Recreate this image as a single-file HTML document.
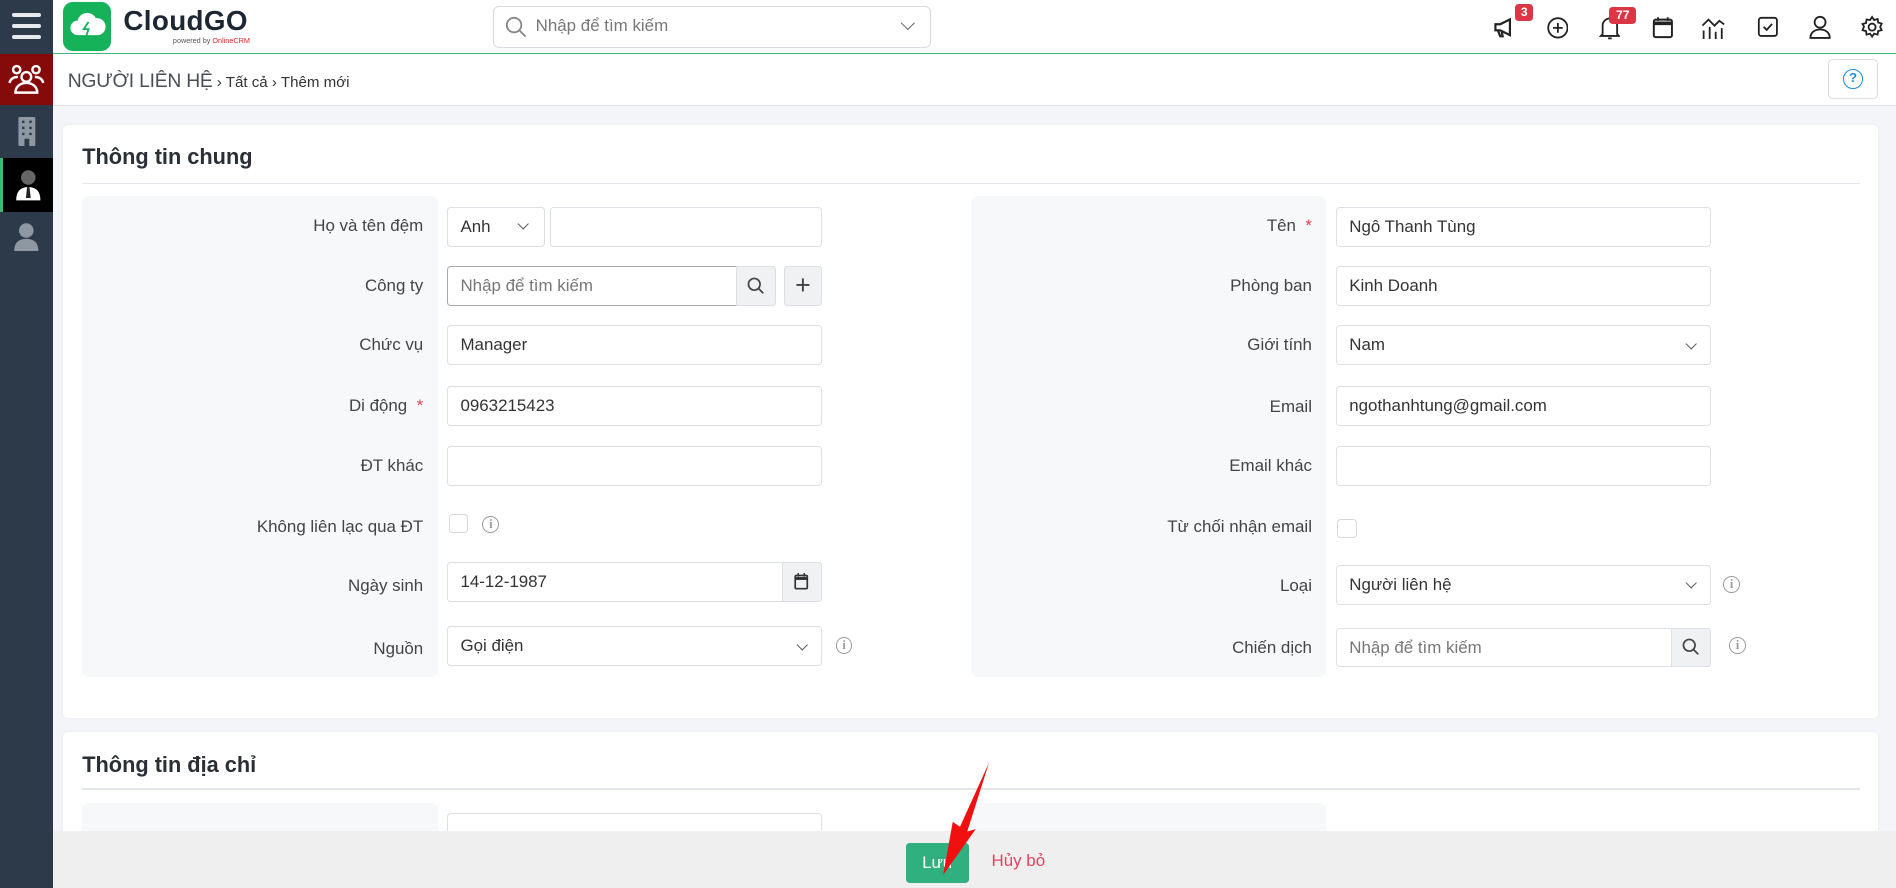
<!DOCTYPE html>
<html><head><meta charset="utf-8">
<style>
*{box-sizing:border-box;margin:0;padding:0}
html,body{width:1896px;height:888px;overflow:hidden}
body{zoom:1.2092;width:1568px;height:734px;position:relative;background:#f3f5f8;font-family:"Liberation Sans","Noto Sans CJK SC",sans-serif;color:#333;font-size:14px}
.a{position:absolute}
.side{left:0;top:0;width:44px;height:734px;background:#2c3a4a}
.top{left:44px;top:0;width:1524px;height:45px;background:#fff;border-bottom:1.5px solid #3cb878}
.crumb{left:44px;top:45px;width:1524px;height:43px;background:#fff;border-bottom:1px solid #dfe3e8}
.card{background:#fff;border-radius:4px;box-shadow:0 0 3px rgba(0,0,0,.06)}
.panel{background:#f7f8fa;border-radius:6px}
.lbl{font-size:14px;color:#444;text-align:right;width:280px;line-height:32px}
.inp{height:33px;border:1px solid #dcdfe3;border-radius:3px;background:#fff;line-height:31px;padding-left:10px;font-size:14px;color:#333}
.ph{color:#777}
.btn{height:33px;border:1px solid #dcdfe3;background:#f0f1f3;border-radius:0 3px 3px 0}
.chev{position:absolute;right:12px;top:11px;width:7px;height:7px;border-right:1.3px solid #555;border-bottom:1.3px solid #555;transform:rotate(45deg)}
.cb{width:16px;height:16px;border:1px solid #d5d8dc;border-radius:3px;background:#fff}
.info{width:14px;height:14px;border:1.3px solid #999;border-radius:50%;font-size:10px;color:#999;text-align:center;line-height:12px;font-family:"Liberation Serif",serif;font-weight:bold}
.star{color:#e04050}
</style></head><body>
<div class="a side"></div>
<div class="a" style="left:10px;top:11px;width:24px;height:3px;background:#e6e9ee;border-radius:2px"></div>
<div class="a" style="left:10px;top:20px;width:24px;height:3px;background:#e6e9ee;border-radius:2px"></div>
<div class="a" style="left:10px;top:29px;width:24px;height:3px;background:#e6e9ee;border-radius:2px"></div>
<div class="a" style="left:0;top:45px;width:44px;height:42px;background:#850b0b"></div>
<svg class="a" style="left:6px;top:50px" width="32" height="32" viewBox="0 0 32 32" fill="none" stroke="#fff" stroke-width="2"><circle cx="8" cy="8" r="3"/><circle cx="24" cy="8" r="3"/><circle cx="16" cy="14" r="4"/><path d="M2 19c1-4 4-5 7-5M30 19c-1-4-4-5-7-5M7 27c0-5 4-8 9-8s9 3 9 8z"/></svg>
<svg class="a" style="left:13px;top:97px" width="18" height="24" viewBox="0 0 18 24"><rect x="2" y="0" width="14" height="24" rx="1" fill="#8e98a3"/><g fill="#2c3a4a"><rect x="5" y="3" width="2" height="2"/><rect x="11" y="3" width="2" height="2"/><rect x="5" y="8" width="2" height="2"/><rect x="11" y="8" width="2" height="2"/><rect x="5" y="13" width="2" height="2"/><rect x="11" y="13" width="2" height="2"/><rect x="7" y="18" width="4" height="6"/></g></svg>
<div class="a" style="left:0;top:131px;width:44px;height:44px;background:#000;border-left:3px solid #3cb878"></div>
<svg class="a" style="left:12px;top:140px" width="22" height="26" viewBox="0 0 22 26"><circle cx="11" cy="7" r="6" fill="#666"/><path d="M1 26c0-8 4-11 10-11s10 3 10 11z" fill="#fff"/><path d="M10 15h2l1 9h-4z" fill="#222"/></svg>
<svg class="a" style="left:11px;top:184px" width="22" height="24" viewBox="0 0 22 24"><circle cx="11" cy="7" r="6" fill="#8e98a3"/><path d="M1 24c0-7 4-10 10-10s10 3 10 10z" fill="#8e98a3"/></svg>

<div class="a top"></div>
<div class="a" style="left:52px;top:2px;width:40px;height:40px;background:#16b25a;border-radius:8px"></div>
<svg class="a" style="left:56px;top:9px" width="32" height="26" viewBox="0 0 32 26"><path d="M8 20a6 6 0 0 1 0-12 8 8 0 0 1 15-2 7 7 0 0 1 2 14z" fill="#fff"/><path d="M17 9l-4 6h4l-2 6" stroke="#16b25a" stroke-width="1.5" fill="none"/></svg>
<div class="a" style="left:102px;top:4px;font-size:23px;font-weight:bold;color:#1d2733;letter-spacing:.3px">CloudGO</div>
<div class="a" style="left:143px;top:30px;font-size:6px;color:#555">powered by <span style="color:#d22">OnlineCRM</span></div>

<div class="a" style="left:408px;top:5px;width:362px;height:35px;border:1px solid #d8dbe0;border-radius:5px;background:#fff"></div>
<svg class="a" style="left:418px;top:13px" width="18" height="18" viewBox="0 0 18 18" fill="none" stroke="#888" stroke-width="1.5"><circle cx="7.5" cy="7.5" r="6"/><path d="M12 12l5 5"/></svg>
<div class="a ph" style="left:443px;top:13px;font-size:14px;color:#777">Nhập để tìm kiếm</div>
<div class="a" style="left:747px;top:15px;width:8px;height:8px;border-right:1.4px solid #666;border-bottom:1.4px solid #666;transform:rotate(45deg)"></div>

<svg class="a" style="left:1235px;top:14px" width="20" height="18" viewBox="0 0 20 18"><path d="M2 6h4l8-4v13l-8-4H2z M4 11l2 5h2l-1-5" fill="none" stroke="#222" stroke-width="1.8"/></svg>
<div class="a" style="left:1253px;top:3px;width:15px;height:14px;background:#dc3545;border-radius:3px;color:#fff;font-size:10px;font-weight:bold;text-align:center;line-height:14px">3</div>
<svg class="a" style="left:1279px;top:14px" width="18" height="18" viewBox="0 0 18 18"><circle cx="9" cy="9" r="8" fill="none" stroke="#222" stroke-width="1.5"/><path d="M9 5v8M5 9h8" stroke="#222" stroke-width="1.5"/></svg>
<svg class="a" style="left:1322px;top:13px" width="18" height="20" viewBox="0 0 18 20"><path d="M3 15V8a6 6 0 0 1 12 0v7l1.5 1.5h-15z" fill="none" stroke="#222" stroke-width="1.5"/><path d="M7.5 18.5h3" stroke="#222" stroke-width="1.5"/></svg>
<div class="a" style="left:1331px;top:6px;width:22px;height:14px;background:#dc3545;border-radius:3px;color:#fff;font-size:10px;font-weight:bold;text-align:center;line-height:14px">77</div>
<svg class="a" style="left:1366px;top:13px" width="18" height="19" viewBox="0 0 18 19"><rect x="1.5" y="3" width="15" height="14.5" rx="1.5" fill="none" stroke="#222" stroke-width="1.6"/><path d="M1.5 6h15" stroke="#222" stroke-width="3"/><path d="M5 1v3M13 1v3" stroke="#222" stroke-width="1.5"/></svg>
<svg class="a" style="left:1406px;top:13px" width="24" height="20" viewBox="0 0 24 20" fill="none" stroke="#222" stroke-width="1.5"><path d="M2 8l5-5 5 5 4-4 4 3"/><path d="M3 12v7M8 9v10M13 13v6M18 10v9"/></svg>
<svg class="a" style="left:1453px;top:13px" width="18" height="18" viewBox="0 0 18 18" fill="none" stroke="#222" stroke-width="1.5"><rect x="1.5" y="1.5" width="15" height="15" rx="2"/><path d="M5.5 9l2.5 2.5 4.5-5"/></svg>
<svg class="a" style="left:1495px;top:12px" width="20" height="20" viewBox="0 0 20 20" fill="none" stroke="#222" stroke-width="1.5"><circle cx="10" cy="6" r="4.5"/><path d="M2 19c0-5 4-7 8-7s8 2 8 7z"/></svg>
<svg class="a" style="left:1538px;top:12px" width="20" height="20" viewBox="0 0 24 24" fill="none" stroke="#222" stroke-width="1.8"><circle cx="12" cy="12" r="3.5"/><path d="M12 2l2 3 3.5-1 .5 3.5 3.5 1-1.5 3.5 1.5 3-3.5 1-.5 3.5-3.5-1-2 3-2-3-3.5 1-.5-3.5-3.5-1 1.5-3.5L2.5 9l3.5-1 .5-3.5L10 5z"/></svg>

<div class="a crumb"></div>
<div class="a" style="left:56px;top:58px;font-size:16px;color:#4a4f55;letter-spacing:-.2px">NGƯỜI LIÊN HỆ<span style="font-size:12.5px;color:#333;letter-spacing:0"> › Tất cả › Thêm mới</span></div>
<div class="a" style="left:1512px;top:49px;width:41px;height:33px;border:1px solid #d9dce0;border-radius:4px;background:#fff"></div>
<div class="a" style="left:1524px;top:57px;width:17px;height:17px;border:1.5px solid #1a8fd8;border-radius:50%;color:#1a8fd8;font-size:11px;font-weight:bold;text-align:center;line-height:14px">?</div>

<div class="a card" style="left:52px;top:103px;width:1501px;height:491px"></div>
<div class="a" style="left:68px;top:119px;font-size:18px;font-weight:bold;color:#2a2f35">Thông tin chung</div>
<div class="a" style="left:68px;top:151px;width:1470px;height:1px;background:#e3e6ea"></div>
<div class="a panel" style="left:68px;top:162px;width:294px;height:398px"></div>
<div class="a panel" style="left:803px;top:162px;width:294px;height:398px"></div>

<div class="a lbl" style="left:70px;top:171px">Họ và tên đệm</div>
<div class="a lbl" style="left:70px;top:221px">Công ty</div>
<div class="a lbl" style="left:70px;top:270px">Chức vụ</div>
<div class="a lbl" style="left:70px;top:320px">Di động &nbsp;<span class="star">*</span></div>
<div class="a lbl" style="left:70px;top:370px">ĐT khác</div>
<div class="a lbl" style="left:70px;top:420px">Không liên lạc qua ĐT</div>
<div class="a lbl" style="left:70px;top:469px">Ngày sinh</div>
<div class="a lbl" style="left:70px;top:521px">Nguồn</div>
<div class="a inp" style="left:370px;top:171px;width:81px">Anh<span class="chev" style="right:14px;top:10px"></span></div>
<div class="a inp" style="left:455px;top:171px;width:225px"></div>
<div class="a inp ph" style="left:370px;top:220px;width:240px;border-color:#aaa;border-radius:3px 0 0 3px">Nhập để tìm kiếm</div>
<div class="a btn" style="left:609px;top:220px;width:33px"></div>
<svg class="a" style="left:618px;top:229px" width="15" height="15" viewBox="0 0 15 15" fill="none" stroke="#444" stroke-width="1.4"><circle cx="6" cy="6" r="4.8"/><path d="M9.5 9.5l4 4"/></svg>
<div class="a btn" style="left:648px;top:220px;width:32px;border-radius:3px;text-align:center;font-size:22px;line-height:30px;color:#444">+</div>
<div class="a inp" style="left:370px;top:269px;width:310px">Manager</div>
<div class="a inp" style="left:370px;top:319px;width:310px">0963215423</div>
<div class="a inp" style="left:370px;top:369px;width:310px"></div>
<div class="a cb" style="left:371px;top:425px"></div>
<div class="a info" style="left:399px;top:427px">i</div>
<div class="a inp" style="left:370px;top:465px;width:310px">14-12-1987</div>
<div class="a btn" style="left:647px;top:465px;width:33px"></div>
<svg class="a" style="left:657px;top:474px" width="12" height="14" viewBox="0 0 12 14"><rect x="1" y="2" width="10" height="11" rx="1" fill="none" stroke="#333" stroke-width="1.4"/><path d="M1 4.5h10" stroke="#333" stroke-width="2.5"/><path d="M3.5 0v3M8.5 0v3" stroke="#333" stroke-width="1.2"/></svg>
<div class="a inp" style="left:370px;top:518px;width:310px">Gọi điện<span class="chev"></span></div>
<div class="a info" style="left:691px;top:527px">i</div>

<div class="a lbl" style="left:805px;top:171px">Tên &nbsp;<span class="star">*</span></div>
<div class="a lbl" style="left:805px;top:221px">Phòng ban</div>
<div class="a lbl" style="left:805px;top:270px">Giới tính</div>
<div class="a lbl" style="left:805px;top:321px">Email</div>
<div class="a lbl" style="left:805px;top:370px">Email khác</div>
<div class="a lbl" style="left:805px;top:420px">Từ chối nhận email</div>
<div class="a lbl" style="left:805px;top:469px">Loại</div>
<div class="a lbl" style="left:805px;top:520px">Chiến dịch</div>
<div class="a inp" style="left:1105px;top:171px;width:310px">Ngô Thanh Tùng</div>
<div class="a inp" style="left:1105px;top:220px;width:310px">Kinh Doanh</div>
<div class="a inp" style="left:1105px;top:269px;width:310px">Nam<span class="chev"></span></div>
<div class="a inp" style="left:1105px;top:319px;width:310px">ngothanhtung@gmail.com</div>
<div class="a inp" style="left:1105px;top:369px;width:310px"></div>
<div class="a cb" style="left:1106px;top:429px"></div>
<div class="a inp" style="left:1105px;top:467px;width:310px">Người liên hệ<span class="chev"></span></div>
<div class="a info" style="left:1425px;top:476px">i</div>
<div class="a inp ph" style="left:1105px;top:519px;width:310px">Nhập để tìm kiếm</div>
<div class="a btn" style="left:1382px;top:519px;width:33px"></div>
<svg class="a" style="left:1391px;top:528px" width="15" height="15" viewBox="0 0 15 15" fill="none" stroke="#444" stroke-width="1.4"><circle cx="6" cy="6" r="4.8"/><path d="M9.5 9.5l4 4"/></svg>
<div class="a info" style="left:1430px;top:527px">i</div>

<div class="a card" style="left:52px;top:605px;width:1501px;height:140px"></div>
<div class="a" style="left:68px;top:622px;font-size:18px;font-weight:bold;color:#2a2f35">Thông tin địa chỉ</div>
<div class="a" style="left:68px;top:652px;width:1470px;height:1px;background:#e3e6ea"></div>
<div class="a panel" style="left:68px;top:664px;width:294px;height:60px"></div>
<div class="a panel" style="left:803px;top:664px;width:294px;height:60px"></div>
<div class="a inp" style="left:370px;top:672px;width:310px"></div>

<div class="a" style="left:44px;top:687px;width:1524px;height:47px;background:#efefef"></div>
<div class="a" style="left:749px;top:697px;width:52px;height:33px;background:#2fb07e;border-radius:3px;color:#fff;font-size:14px;text-align:center;line-height:33px">Lưu</div>
<div class="a" style="left:820px;top:704px;font-size:14px;color:#e0445f">Hủy bỏ</div>
<svg class="a" style="left:770px;top:628px" width="56" height="100" viewBox="0 0 56 100"><path d="M48 3 L30 60 L37 58 L10 96 L18 52 L24 56 Z" fill="#f01010"/></svg>
</body></html>
